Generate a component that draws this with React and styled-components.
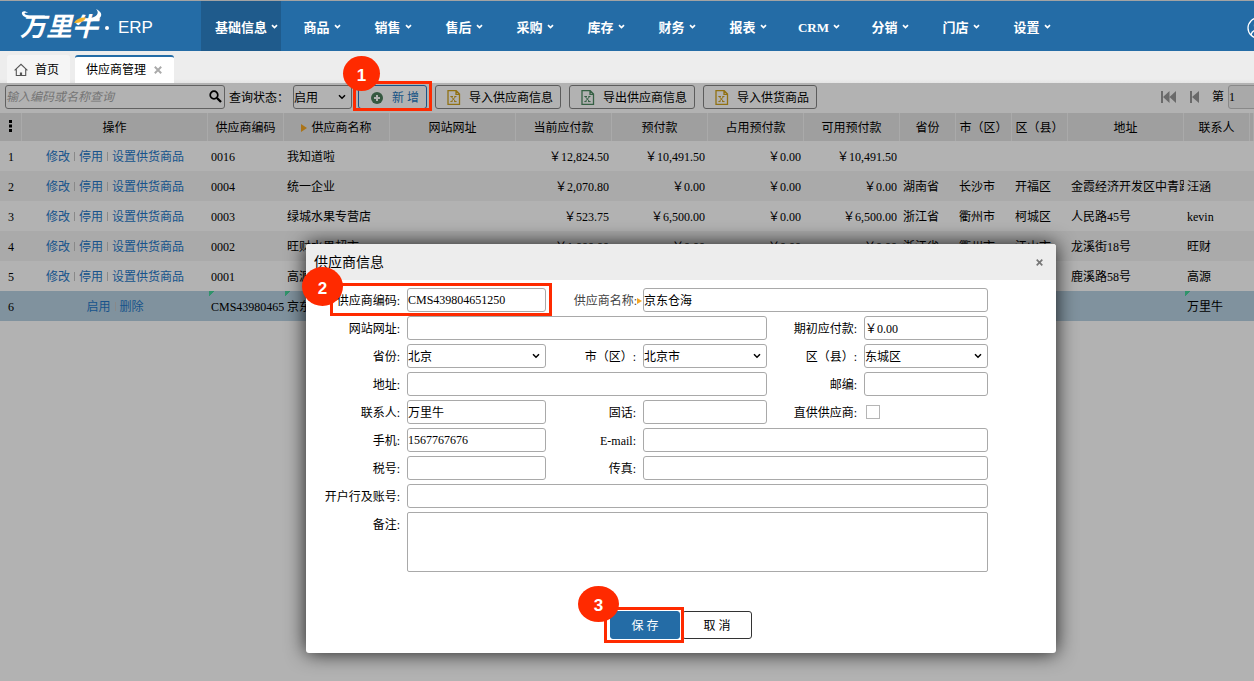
import styled, { createGlobalStyle, css } from "styled-components";
import { useState } from "react";

const GlobalStyle = createGlobalStyle`
  * {
    box-sizing: border-box;
  }
  body {
    margin: 0;
    background: #fff;
    color: #000;
    font-family: "Liberation Serif", "Noto Sans CJK SC", serif;
    font-size: 12px;
    line-height: 18px;
  }
  button, input, select, textarea {
    font: inherit;
    color: inherit;
    margin: 0;
  }
`;

const Page = styled.div`
  display: flex;
  flex-direction: column;
  min-height: 100vh;
  overflow: hidden;
`;

const Header = styled.header`
  display: flex;
  align-items: stretch;
  height: 51px;
  border-top: 1px solid #a3a3a3;
  background: #246ca6;
  color: #fff;
`;

const Brand = styled.a`
  display: flex;
  align-items: center;
  flex: none;
  width: 201px;
  padding: 4px 0 0 16px;
  color: #fff;
  font-family: "Liberation Sans", sans-serif;
  font-size: 17px;
  text-decoration: none;
`;

const BrandDot = styled.span`
  width: 4px;
  height: 4px;
  margin: 0 9px 0 1px;
  border-radius: 50%;
  background: #fff;
`;

const Nav = styled.nav`
  display: flex;
  flex: 1;
`;

const NavItem = styled.a`
  display: flex;
  align-items: center;
  justify-content: center;
  min-width: 71px;
  padding: 4px 14px 0;
  background: ${(props) => (props.$active ? "#1f5b8c" : "transparent")};
  color: #fff;
  font-size: 13px;
  font-weight: bold;
  text-decoration: none;
  white-space: nowrap;
`;

const NavLabel = styled.span`
  position: relative;
`;

const NavCaret = styled.svg`
  position: absolute;
  left: 100%;
  top: 5px;
  margin-left: 4px;
`;

const UserButton = styled.button`
  display: flex;
  align-items: center;
  flex: none;
  margin-right: -15px;
  padding: 3px 0 0;
  border: 0;
  background: none;
  color: #fff;
`;

const TabBar = styled.div`
  display: flex;
  align-items: flex-end;
  gap: 5px;
  height: 32px;
  padding-left: 7px;
  background: linear-gradient(#ededed 28px, #e4e4e4);
`;

const Tab = styled.a`
  display: flex;
  align-items: center;
  gap: ${(props) => (props.$active ? "8px" : "7px")};
  height: 28px;
  padding: ${(props) => (props.$active ? "0 12px 0 11px" : "2px 11px 0 7px")};
  border-top: ${(props) => (props.$active ? "2px solid #246ca6" : "0")};
  border-radius: 3px 3px 0 0;
  background: ${(props) => (props.$active ? "#fff" : "#f5f5f5")};
  color: #000;
  text-decoration: none;
`;

const Workspace = styled.main`
  position: relative;
  flex: 1;
`;

const Toolbar = styled.div`
  display: flex;
  align-items: center;
  height: 30px;
  padding-left: 5px;
  padding-bottom: 2px;
  white-space: nowrap;
`;

const SearchBox = styled.div`
  position: relative;
  flex: none;
  width: 220px;
  margin-right: 4px;
`;

const SearchButton = styled.button`
  position: absolute;
  top: 5px;
  right: 3px;
  display: flex;
  padding: 0;
  border: 0;
  background: none;
`;

const field = css`
  display: block;
  width: 100%;
  min-width: 0;
  border: 1px solid ${(props) => (props.$dark ? "#8c8c8c" : "#a9a9a9")};
  border-radius: 3px;
  background: #fff;
  outline: 0;
`;

const Input = styled.input`
  ${field}
  height: 24px;
  padding: 0;

  &::placeholder {
    color: #a8a8a8;
    font-style: italic;
    opacity: 1;
  }
`;

const Textarea = styled.textarea`
  ${field}
  height: 60px;
  padding: 2px;
  border-radius: 2px;
  resize: none;
`;

const SelectWrapper = styled.div`
  position: relative;
  flex: none;
  min-width: 0;
  width: ${(props) => props.$width || "auto"};
`;

const StyledSelect = styled.select`
  ${field}
  height: 24px;
  padding: 1px 0 0;
  appearance: none;
`;

const SelectArrow = styled.svg`
  position: absolute;
  top: 9px;
  right: 6px;
  pointer-events: none;
`;

const FilterLabel = styled.label`
  width: 64px;
  padding-top: 2px;
`;

const ToolButtons = styled.div`
  display: flex;
  gap: 8px;
  margin-left: 6px;
`;

const ToolButton = styled.button`
  display: flex;
  align-items: center;
  gap: ${(props) => (props.$primary ? "9px" : "8px")};
  height: 24px;
  padding: ${(props) => (props.$primary ? "1px 7px 0 12px" : "1px 7px 0 11px")};
  border: 1px solid ${(props) => (props.$primary ? "#2478c0" : "#858585")};
  border-radius: 3px;
  background: none;
  color: ${(props) => (props.$primary ? "#2478c0" : "#000")};
  white-space: nowrap;
`;

const Pager = styled.div`
  display: flex;
  align-items: center;
  flex: none;
  margin-left: auto;
  margin-right: -20px;
`;

const PagerButton = styled.button`
  display: flex;
  margin-right: ${(props) => props.$gap};
  padding: 0;
  border: 0;
  background: none;
`;

const PageNumber = styled(Input)`
  width: 46px;
  margin-left: 4px;
  border-color: #c4c4c4;
  background: #f2f2f2;
`;

const Table = styled.table`
  width: 100%;
  table-layout: fixed;
  border-collapse: separate;
  border-spacing: 0;
`;

const HeadCell = styled.th`
  height: 28px;
  padding: 2px 0 0;
  overflow: hidden;
  border-right: 1px solid #f4f4f4;
  background: #e4e4e4;
  font-weight: normal;
  white-space: nowrap;
`;

const Row = styled.tr`
  background: #fff;

  &:nth-child(even) {
    background: #f4f4f4;
  }
  &&[aria-selected="true"] {
    background: #b8d2e2;
  }
`;

const Cell = styled.td`
  height: 30px;
  padding: 2px 3px 0;
  overflow: hidden;
  text-align: ${(props) => props.$align || "left"};
  white-space: nowrap;
  ${(props) =>
    props.$changed &&
    "background: linear-gradient(135deg, #45d39a 4px, transparent 4px) 1px 0 no-repeat;"}
`;

const Required = styled.span`
  display: inline-block;
  margin-right: ${(props) => (props.$small ? "0" : "4px")};
  border: solid transparent;
  border-width: ${(props) => (props.$small ? "3px 0 3px 5px" : "4px 0 4px 6px")};
  border-left-color: #f5a623;
`;

const Actions = styled.div`
  display: flex;
  align-items: center;
  justify-content: center;
`;

const ActionLink = styled.a`
  color: #2478c8;
  text-decoration: none;

  & + &::before {
    content: "";
    display: inline-block;
    width: 1px;
    height: 9px;
    margin: 0 4px;
    background: #c4c4c4;
  }
`;

const Overlay = styled.div`
  position: absolute;
  inset: 0;
  padding: 161px 24px 24px 306px;
  background: rgba(0, 0, 0, 0.3);
`;

const Dialog = styled.section`
  max-width: 750px;
  border-radius: 3px;
  background: #fff;
  box-shadow: 0 0 20px rgba(0, 0, 0, 0.85);
`;

const DialogHeader = styled.div`
  display: flex;
  align-items: center;
  justify-content: space-between;
  height: 36px;
  padding: 0 13px 0 8px;
  border-radius: 3px 3px 0 0;
  background: #ededed;
`;

const DialogTitle = styled.h2`
  margin: 0;
  padding-top: 2px;
  font-size: 14px;
  font-weight: normal;
`;

const CloseButton = styled.button`
  display: flex;
  padding: 0;
  border: 0;
  background: none;
  color: ${(props) => props.$color || "#777"};
`;

const FormGrid = styled.div`
  display: grid;
  grid-template-columns: 101px 139fr 97px 124fr 97px 124fr;
  gap: 4px 0;
  padding: 8px 68px 0 0;
`;

const FormLabel = styled.label`
  display: flex;
  align-items: center;
  justify-content: flex-end;
  height: 24px;
  padding: 1px ${(props) => (props.$required ? "1px" : "7px")} 0 0;
  color: ${(props) => (props.$required ? "#444" : "#000")};
  white-space: nowrap;
`;

const FormField = styled.div`
  position: relative;
  grid-column: span ${(props) => props.$span || 1};
  min-width: 0;
`;

const Checkbox = styled.input`
  appearance: none;
  display: block;
  width: 14px;
  height: 14px;
  margin: 5px 0 0 2px;
  border: 1px solid #b5b5b5;
  background: #fff;
`;

const DialogFooter = styled.div`
  display: flex;
  gap: 2px;
  padding: 39px 0 14px 304px;
`;

const FooterButton = styled.button`
  width: 70px;
  height: 28px;
  padding: 2px 0 0;
  border: 1px solid ${(props) => (props.$primary ? "#246ca6" : "#333")};
  border-radius: 3px;
  background: ${(props) => (props.$primary ? "#246ca6" : "#fff")};
  color: ${(props) => (props.$primary ? "#fff" : "#000")};
`;

// Numbered red step markers laid over the control they point at
const Marked = styled.div`
  position: relative;
`;

const StepFrame = styled.span`
  position: absolute;
  z-index: 2;
  inset: ${(props) => props.$inset};
  border: 3px solid #ff2a00;
  pointer-events: none;
`;

const StepBadge = styled.span`
  position: absolute;
  z-index: 3;
  left: ${(props) => props.$left};
  top: ${(props) => props.$top};
  display: flex;
  align-items: center;
  justify-content: center;
  width: ${(props) => props.$width || "41px"};
  height: ${(props) => props.$height || "39px"};
  padding-top: 4px;
  border-radius: 50%;
  background: #ff2a00;
  color: #fff;
  font-family: "Liberation Sans", sans-serif;
  font-size: 17px;
  font-weight: bold;
  pointer-events: none;
`;

function Step({ number, inset, ...badge }) {
  return (
    <>
      <StepFrame $inset={inset} />
      <StepBadge {...badge}>{number}</StepBadge>
    </>
  );
}

function Logo() {
  return (
    <svg width="88" height="38" viewBox="0 0 88 38" fill="#fff" overflow="visible">
      <text
        x="4"
        y="27"
        fontFamily="Noto Sans CJK SC"
        fontSize="26"
        fontWeight="700"
        fontStyle="italic"
      >
        万里牛
      </text>
      <path d="M12 4C9 1 5 2 6 5C7 8 11 9 15 9H27L29 6.500H16C12 6.500 9 6 8.500 4.500C8.500 3.500 10 3.500 12 4Z" />
      <path d="M80 0C84 4 81 8 73 9.500L71 12.500C81 13.500 92 6 80 0Z" />
      <path d="M58 14Q61 8 70 8.500Q68 14 58 14Z" fill="#f5b52e" />
    </svg>
  );
}

function Chevron({ as: Wrapper, size = 8, weight = 1.5 }) {
  return (
    <Wrapper width={size} height={size - 2} viewBox="0 0 8 6" fill="none">
      <path d="M1 1.3 4 4.3 7 1.3" stroke="currentColor" strokeWidth={weight} />
    </Wrapper>
  );
}

function Cross({ size = 7 }) {
  return (
    <svg width={size} height={size} viewBox="0 0 7 7" fill="none">
      <path d="M.7.7 6.3 6.3M6.3.7.7 6.3" stroke="currentColor" strokeWidth="1.7" />
    </svg>
  );
}

function HomeIcon() {
  return (
    <svg width="14" height="14" viewBox="0 0 14 14" fill="none" stroke="#555">
      <path d="M.6 7.4 7 1.3l6.400 6.100M2.300 6.300v6.200h9.400V6.300" strokeWidth="1.1" />
      <path d="M7 12V9.500" strokeWidth="2.2" />
    </svg>
  );
}

function SheetIcon({ color }) {
  return (
    <svg width="14" height="15" viewBox="0 0 14 15" fill="none" stroke={color}>
      <path d="M1 .7H9.2L12.5 4V14.3H1ZM9 1V4.3H12.4" strokeWidth="1.3" />
      <path d="M4.3 6.7 8.5 11.5M8.5 6.7 4.3 11.5M3.4 6.5H6M7.3 6.5H9.4M3.4 11.6H5.6M7 11.6H9.6" />
    </svg>
  );
}

function Select({ id, value, width, dark }) {
  const [selected, setSelected] = useState(value);
  return (
    <SelectWrapper $width={width}>
      <StyledSelect
        id={id}
        $dark={dark}
        value={selected}
        onChange={(e) => setSelected(e.target.value)}
      >
        <option>{value}</option>
      </StyledSelect>
      <Chevron as={SelectArrow} />
    </SelectWrapper>
  );
}

const menus = [
  "基础信息", "商品", "销售", "售后", "采购", "库存",
  "财务", "报表", "CRM", "分销", "门店", "设置",
];

const columns = [
  { title: "操作", width: 186 },
  { title: "供应商编码", width: 76 },
  { title: "供应商名称", width: 106, required: true },
  { title: "网站网址", width: 126 },
  { title: "当前应付款", width: 96, align: "right" },
  { title: "预付款", width: 96, align: "right" },
  { title: "占用预付款", width: 96, align: "right" },
  { title: "可用预付款", width: 96, align: "right" },
  { title: "省份", width: 56 },
  { title: "市（区）", width: 56 },
  { title: "区（县）", width: 56 },
  { title: "地址", width: 116 },
  { title: "联系人", width: 66 },
];

const suppliers = [
  ["0016", "我知道啦", "", "￥12,824.50", "￥10,491.50", "￥0.00", "￥10,491.50", "", "", "", "", ""],
  ["0004", "统一企业", "", "￥2,070.80", "￥0.00", "￥0.00", "￥0.00", "湖南省", "长沙市", "开福区", "金霞经济开发区中青路", "汪涵"],
  ["0003", "绿城水果专营店", "", "￥523.75", "￥6,500.00", "￥0.00", "￥6,500.00", "浙江省", "衢州市", "柯城区", "人民路45号", "kevin"],
  ["0002", "旺财水果超市", "", "￥1,000.00", "￥0.00", "￥0.00", "￥0.00", "浙江省", "衢州市", "江山市", "龙溪街18号", "旺财"],
  ["0001", "高源", "", "", "", "", "", "", "", "", "鹿溪路58号", "高源"],
  ["CMS439804651250", "京东仓海", "", "", "", "", "", "", "", "", "", "万里牛"],
];

function SupplierTable() {
  return (
    <Table>
      <colgroup>
        <col width="22" />
        {columns.map((column) => (
          <col key={column.title} width={column.width} />
        ))}
        <col />
      </colgroup>
      <thead>
        <tr>
          <HeadCell>
            <svg width="3" height="12" viewBox="0 0 3 12">
              <path d="M0 0h3v3H0ZM0 4.5h3v3H0ZM0 9h3v3H0Z" />
            </svg>
          </HeadCell>
          {columns.map((column) => (
            <HeadCell key={column.title}>
              {column.required && <Required />}
              {column.title}
            </HeadCell>
          ))}
          <HeadCell />
        </tr>
      </thead>
      <tbody>
        {suppliers.map((supplier, index) => {
          const isNew = index === suppliers.length - 1;
          const actions = isNew ? ["启用", "删除"] : ["修改", "停用", "设置供货商品"];
          return (
            <Row key={supplier[0]} aria-selected={isNew}>
              <Cell $align="center">{index + 1}</Cell>
              <Cell>
                <Actions>
                  {actions.map((action) => (
                    <ActionLink key={action} href="#">
                      {action}
                    </ActionLink>
                  ))}
                </Actions>
              </Cell>
              {supplier.map((value, i) => (
                <Cell
                  key={i}
                  $align={columns[i + 1].align}
                  $changed={isNew && value !== ""}
                >
                  {value}
                </Cell>
              ))}
              <Cell />
            </Row>
          );
        })}
      </tbody>
    </Table>
  );
}

function TextField({ id, label, value = "", span, required, children }) {
  return (
    <>
      <FormLabel htmlFor={id} $required={required}>
        {label}:{required && <Required $small />}
      </FormLabel>
      <FormField $span={span}>
        <Input id={id} defaultValue={value} />
        {children}
      </FormField>
    </>
  );
}

function SelectField({ id, label, value }) {
  return (
    <>
      <FormLabel htmlFor={id}>{label}:</FormLabel>
      <FormField>
        <Select id={id} value={value} />
      </FormField>
    </>
  );
}

function SupplierDialog() {
  return (
    <Dialog role="dialog" aria-labelledby="dialog-title">
      <DialogHeader>
        <DialogTitle id="dialog-title">供应商信息</DialogTitle>
        <CloseButton aria-label="关闭">
          <Cross />
        </CloseButton>
      </DialogHeader>
      <FormGrid>
        <TextField id="code" label="供应商编码" value="CMS439804651250">
          <Step number={2} inset="-5px -6px -4px -77px" $left="-105px" $top="-21px" />
        </TextField>
        <TextField id="name" label="供应商名称" value="京东仓海" span={3} required />
        <TextField id="site" label="网站网址" span={3} />
        <TextField id="payable" label="期初应付款" value="￥0.00" />
        <SelectField id="province" label="省份" value="北京" />
        <SelectField id="city" label="市（区）" value="北京市" />
        <SelectField id="district" label="区（县）" value="东城区" />
        <TextField id="address" label="地址" span={3} />
        <TextField id="zip" label="邮编" />
        <TextField id="contact" label="联系人" value="万里牛" />
        <TextField id="tel" label="固话" />
        <FormLabel htmlFor="direct">直供供应商:</FormLabel>
        <FormField>
          <Checkbox id="direct" type="checkbox" />
        </FormField>
        <TextField id="mobile" label="手机" value="1567767676" />
        <TextField id="email" label="E-mail" span={3} />
        <TextField id="tax" label="税号" />
        <TextField id="fax" label="传真" span={3} />
        <TextField id="bank" label="开户行及账号" span={5} />
        <FormLabel htmlFor="remark">备注:</FormLabel>
        <FormField $span={5}>
          <Textarea id="remark" />
        </FormField>
      </FormGrid>
      <DialogFooter>
        <Marked>
          <FooterButton $primary>保 存</FooterButton>
          <Step number={3} inset="-4px -4px -4px -6px" $left="-32px" $top="-25px" $height="36px" />
        </Marked>
        <FooterButton>取 消</FooterButton>
      </DialogFooter>
    </Dialog>
  );
}

export default function App() {
  return (
    <Page>
      <GlobalStyle />
      <Header>
        <Brand href="#" aria-label="万里牛 ERP">
          <Logo />
          <BrandDot />
          ERP
        </Brand>
        <Nav>
          {menus.map((menu, index) => (
            <NavItem key={menu} href="#" $active={index === 0}>
              <NavLabel>
                {menu}
                <Chevron as={NavCaret} size={7} weight={2} />
              </NavLabel>
            </NavItem>
          ))}
        </Nav>
        <UserButton aria-label="用户">
          <svg width="22" height="22" viewBox="0 0 22 22" fill="none" stroke="currentColor" strokeWidth="1.3">
            <circle cx="11" cy="11" r="10" />
            <circle cx="11" cy="8.5" r="3.5" />
            <path d="M4 18Q5 13 11 13T18 18" />
          </svg>
        </UserButton>
      </Header>
      <TabBar>
        <Tab href="#">
          <HomeIcon />
          首页
        </Tab>
        <Tab href="#" $active>
          供应商管理
          <CloseButton as="span" $color="#aaa">
            <Cross size={8} />
          </CloseButton>
        </Tab>
      </TabBar>
      <Workspace>
        <Toolbar>
          <SearchBox>
            <Input $dark aria-label="查询" placeholder="输入编码或名称查询" />
            <SearchButton aria-label="搜索">
              <svg width="13" height="13" viewBox="0 0 13 13" fill="none" stroke="#000">
                <circle cx="5" cy="5" r="3.8" strokeWidth="1.7" />
                <path d="M8 8 12 12" strokeWidth="2.3" />
              </svg>
            </SearchButton>
          </SearchBox>
          <FilterLabel htmlFor="status">查询状态：</FilterLabel>
          <Select id="status" value="启用" width="59px" dark />
          <ToolButtons>
            <Marked>
              <ToolButton $primary>
                <svg width="12" height="12" viewBox="0 0 12 12">
                  <circle cx="6" cy="6" r="6" fill="#4c7f5c" />
                  <path d="M6 3v6M3 6h6" stroke="#fff" strokeWidth="2" />
                </svg>
                新 增
              </ToolButton>
              <Step
                number={1}
                inset="-4px -5px -2px -5px"
                $left="-15px"
                $top="-29px"
                $width="37px"
                $height="35px"
              />
            </Marked>
            <ToolButton>
              <SheetIcon color="#d0a21c" />
              导入供应商信息
            </ToolButton>
            <ToolButton>
              <SheetIcon color="#4c8a62" />
              导出供应商信息
            </ToolButton>
            <ToolButton>
              <SheetIcon color="#d0a21c" />
              导入供货商品
            </ToolButton>
          </ToolButtons>
          <Pager>
            <PagerButton $gap="14px" aria-label="首页">
              <svg width="15" height="12" viewBox="0 0 15 12" fill="#999">
                <path d="M0 0h2v12H0ZM8.5 0v12L2 6ZM15 0v12L8.5 6Z" />
              </svg>
            </PagerButton>
            <PagerButton $gap="13px" aria-label="上一页">
              <svg width="9" height="12" viewBox="0 0 9 12" fill="#999">
                <path d="M0 0h2v12H0ZM9 0v12L2 6Z" />
              </svg>
            </PagerButton>
            <label htmlFor="page">第</label>
            <PageNumber id="page" defaultValue="1" />
          </Pager>
        </Toolbar>
        <SupplierTable />
        <Overlay>
          <SupplierDialog />
        </Overlay>
      </Workspace>
    </Page>
  );
}
